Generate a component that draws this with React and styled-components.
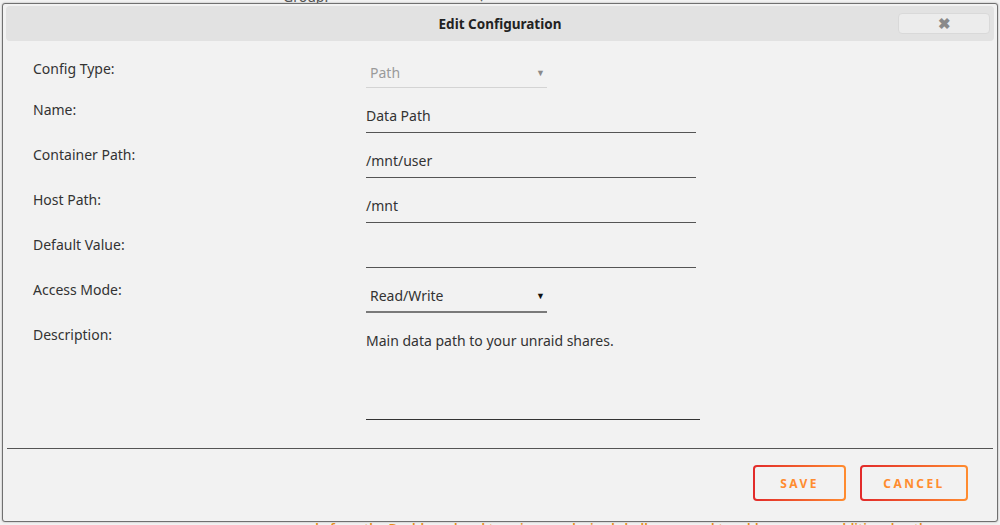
import React from "react";
import styled, { createGlobalStyle } from "styled-components";

const GlobalStyle = createGlobalStyle`
  html, body {
    margin: 0;
    padding: 0;
    background: #f2f2f2;
  }
  body {
    font-family: "Noto Sans", "Liberation Sans", sans-serif;
    color: #333;
  }
`;

const Page = styled.div`
  position: relative;
  height: 525px;
  overflow: hidden;
  display: flex;
  flex-direction: column;
  justify-content: space-between;
`;

const BehindTop = styled.div`
  display: flex;
  align-items: flex-end;
  gap: 150px;
  margin-top: -13px;
  padding-left: 283px;
  font-size: 14px;
  color: #555;
`;

const BehindBottom = styled.div`
  margin-bottom: -12px;
  padding-left: 278px;
  font-size: 13px;
  font-weight: 600;
  color: #e8901a;
  white-space: nowrap;
`;

const Dialog = styled.div`
  position: absolute;
  top: 3px;
  left: 2px;
  width: 996px;
  height: 519px;
  box-sizing: border-box;
  padding: 2px;
  background: #f2f2f2;
  border: 1px solid #707070;
  border-radius: 3px;
  box-shadow: 0 0 2px rgba(0, 0, 0, 0.35);
  display: flex;
  flex-direction: column;
`;

const TitleBar = styled.div`
  height: 35px;
  margin: 0 1px;
  background: #e2e2e2;
  border-radius: 4px;
  display: grid;
  grid-template-columns: 1fr auto 1fr;
  align-items: center;
`;

const Title = styled.h1`
  grid-column: 2;
  margin: 0;
  font-size: 13.5px;
  font-weight: 700;
  color: #222;
`;

const CloseButton = styled.button`
  grid-column: 3;
  justify-self: end;
  margin-right: 4px;
  width: 92px;
  height: 21px;
  padding: 0;
  background: #ececec;
  border: 1px solid #d9d9d9;
  border-radius: 4px;
  color: #8a8a8a;
  font-size: 15px;
  font-weight: 700;
  line-height: 1;
  cursor: pointer;
`;

const Form = styled.div`
  flex: 1;
  padding: 18px 0 0 28px;
  display: flex;
  flex-direction: column;
  gap: 12px;
`;

const Row = styled.div`
  display: grid;
  grid-template-columns: 333px auto;
  align-items: start;
`;

const Label = styled.label`
  font-size: 14px;
  line-height: 20px;
  color: #333;
`;

const Field = styled.div`
  width: ${(p) => p.$width || 330}px;
  height: ${(p) => p.$height || 20}px;
  padding: ${(p) => (p.$select ? "6px 2px 6px 4px" : "6px 0")};
  border-bottom: ${(p) => p.$line || "1px solid #555"};
  box-sizing: content-box;
  display: flex;
  align-items: ${(p) => (p.$multi ? "flex-start" : "center")};
  justify-content: space-between;
  font-size: 14px;
  line-height: 20px;
  color: ${(p) => (p.$muted ? "#9a9a9a" : "#333")};
`;

const Arrow = styled.span`
  font-size: 9px;
  color: ${(p) => (p.$muted ? "#8a8a8a" : "#111")};
`;

const Footer = styled.div`
  margin: 0 2px;
  border-top: 1px solid #555;
  padding: 16px 25px 18px 0;
  display: flex;
  justify-content: flex-end;
  gap: 14px;
`;

const ActionButton = styled.button`
  height: 36px;
  min-width: ${(p) => p.$w}px;
  padding: 0 20px;
  border: 2px solid transparent;
  border-radius: 4px;
  background: linear-gradient(#f2f2f2, #f2f2f2) padding-box,
    linear-gradient(90deg, #e22a2a, #ff8c2f) border-box;
  color: #ff8c2f;
  font-family: "Noto Sans", "Liberation Sans", sans-serif;
  font-size: 12px;
  font-weight: 700;
  letter-spacing: 2.4px;
  cursor: pointer;
`;

export default function App() {
  return (
    <>
      <GlobalStyle />
      <Page>
        <BehindTop>
          <span>Group:</span>
          <span>▾</span>
        </BehindTop>
        <BehindBottom>
          console from the Dashboard and type in your desired shell command to add or remove additional paths
        </BehindBottom>
        <Dialog>
          <TitleBar>
            <Title>Edit Configuration</Title>
            <CloseButton aria-label="close">✖</CloseButton>
          </TitleBar>
          <Form>
            <Row>
              <Label>Config Type:</Label>
              <Field $select $muted $width={175} $height={20} $line="1px solid #d4d4d4" style={{ paddingTop: 4, paddingBottom: 4 }}>
                <span>Path</span>
                <Arrow $muted>▼</Arrow>
              </Field>
            </Row>
            <Row>
              <Label>Name:</Label>
              <Field>Data Path</Field>
            </Row>
            <Row>
              <Label>Container Path:</Label>
              <Field>/mnt/user</Field>
            </Row>
            <Row>
              <Label>Host Path:</Label>
              <Field>/mnt</Field>
            </Row>
            <Row>
              <Label>Default Value:</Label>
              <Field />
            </Row>
            <Row>
              <Label>Access Mode:</Label>
              <Field $select $width={175} $line="2px solid #7a7a7a" style={{ paddingBottom: 5 }}>
                <span>Read/Write</span>
                <Arrow>▼</Arrow>
              </Field>
            </Row>
            <Row>
              <Label>Description:</Label>
              <Field $multi $width={334} $height={82} $line="1px solid #333">
                Main data path to your unraid shares.
              </Field>
            </Row>
          </Form>
          <Footer>
            <ActionButton $w={93}>SAVE</ActionButton>
            <ActionButton $w={108}>CANCEL</ActionButton>
          </Footer>
        </Dialog>
      </Page>
    </>
  );
}
